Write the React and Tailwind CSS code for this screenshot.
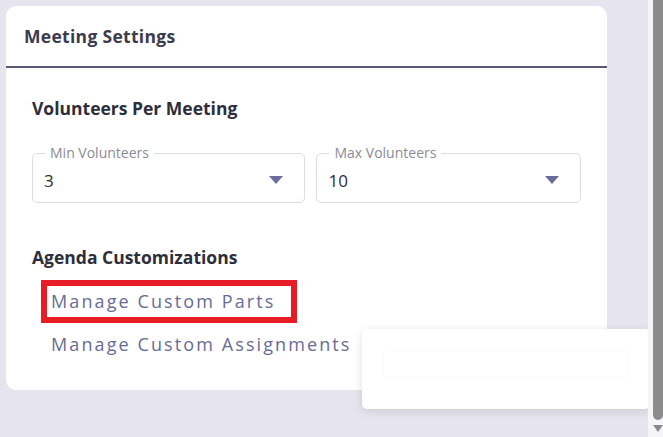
import React from 'react';

const FONT = { fontFamily: '"Open Sans", Lato, sans-serif' };

function Select({ label, value, width }) {
  return (
    <div className={`relative ${width} h-[50px] border border-[#dcdce2] rounded-[5px] pl-[11px] pr-[21px] flex items-center justify-between`}>
      <span className="absolute -top-[9px] left-[12px] px-[5px] bg-white text-[14px] leading-[16px] text-[#8b8b96]">{label}</span>
      <span className="text-[17px] leading-[20px] text-[#2e2e36] mt-[6px]">{value}</span>
      <svg width="14" height="9" viewBox="0 0 14 9" className="mt-[4px]">
        <path d="M0 0 L14 0 L7 8 Z" fill="#6b6b9c" />
      </svg>
    </div>
  );
}

export default function App() {
  return (
    <div className="relative w-[663px] h-[437px] bg-[#e6e5ee] overflow-hidden" style={FONT}>
      {/* Card */}
      <div className="absolute left-[6px] top-[6px] w-[601px] h-[384px] bg-white rounded-[10px] flex flex-col">
        <div className="h-[62px] flex items-center px-[18px] border-b-2 border-[#585870]">
          <h1 className="text-[17.5px] font-bold text-[#3b3b4c] tracking-[0.3px]">Meeting Settings</h1>
        </div>
        <div className="px-[26px] pt-[29px] flex flex-col">
          <h2 className="text-[17.5px] font-bold text-[#2e2e3a] leading-[22px]">Volunteers Per Meeting</h2>
          <div className="flex gap-[11px] mt-[34px]">
            <Select label="Min Volunteers" value="3" width="w-[274px]" />
            <Select label="Max Volunteers" value="10" width="w-[265px]" />
          </div>
          <h2 className="text-[17.5px] font-bold text-[#2e2e3a] leading-[22px] mt-[43px]">Agenda Customizations</h2>
          <div className="flex flex-col items-start mt-[12px] ml-[9px] text-[18px] text-[#686c94] tracking-[2.1px]">
            <div className="border-[6px] border-[#e81c24] pl-[4px] pr-[16px] py-[6px] leading-[19px]">Manage Custom Parts</div>
            <div className="pl-[10px] mt-[11px] leading-[20px]">Manage Custom Assignments</div>
          </div>
        </div>
      </div>

      {/* Toast */}
      <div className="absolute left-[362px] top-[329px] w-[288px] h-[80px] bg-white rounded-[5px] shadow-[0_2px_10px_rgba(0,0,0,0.12)]">
        <div className="mx-[21px] mt-[21px] h-[28px] border border-[#fbfbfc] rounded-[4px]" />
      </div>

      {/* Scrollbar */}
      <div className="absolute right-0 top-0 w-[15px] h-[437px] bg-[#f5f5f7] flex flex-col items-end">
        <div className="w-[10px] h-[420px] bg-[#8b8b8b] rounded-b-[5px]" />
        <svg width="10" height="8" viewBox="0 0 10 8" className="mt-[5px]">
          <path d="M0 0 L10 0 L5 7 Z" fill="#8b8b8b" />
        </svg>
      </div>
    </div>
  );
}
